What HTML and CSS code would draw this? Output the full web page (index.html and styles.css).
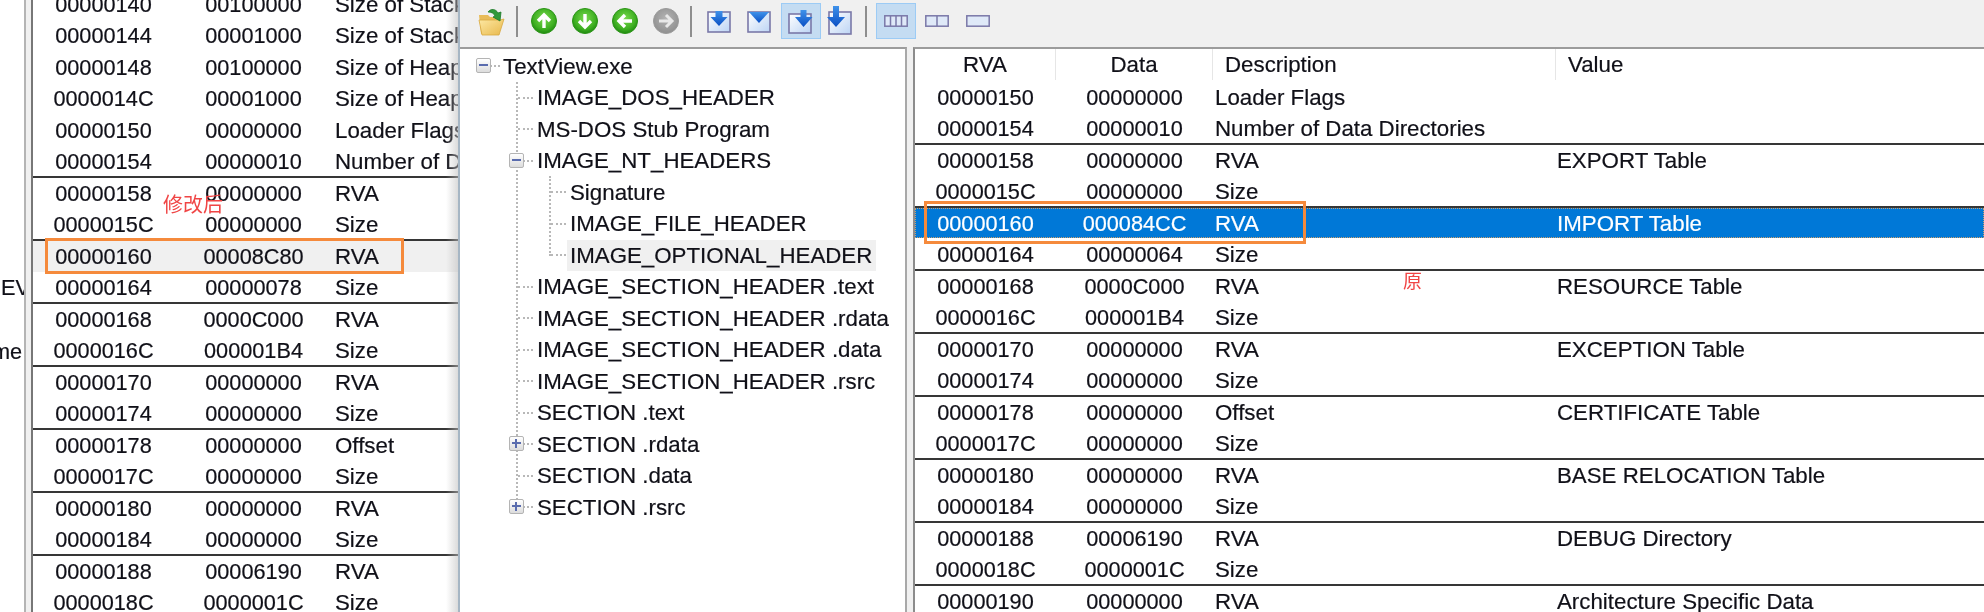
FILE: index.html
```html
<!DOCTYPE html>
<html lang="zh-CN">
<head>
  <meta charset="UTF-8">
  <title>PE View</title>
  <link rel="stylesheet" href="styles.css">
</head>
<body>
  <svg class="defs" width="0" height="0">
    <defs>
      <radialGradient id="green" cx="50%" cy="40%" r="60%">
        <stop offset="0" stop-color="#7ada4e"/>
        <stop offset="0.7" stop-color="#3fb022"/>
        <stop offset="1" stop-color="#1f8a10"/>
      </radialGradient>
      <radialGradient id="grey" cx="50%" cy="40%" r="60%">
        <stop offset="0" stop-color="#b4b4b4"/>
        <stop offset="1" stop-color="#8f8f8f"/>
      </radialGradient>
      <linearGradient id="paper" x1="0" y1="0" x2="1" y2="1">
        <stop offset="0" stop-color="#ffffff"/>
        <stop offset="1" stop-color="#bcd4f4"/>
      </linearGradient>
      <linearGradient id="arrow" x1="0" y1="0" x2="0" y2="1">
        <stop offset="0" stop-color="#3f92ea"/>
        <stop offset="1" stop-color="#0a4fc4"/>
      </linearGradient>
      <linearGradient id="folder" x1="0" y1="0" x2="1" y2="1">
        <stop offset="0" stop-color="#fde9a4"/>
        <stop offset="1" stop-color="#e8b84c"/>
      </linearGradient>
      <symbol id="i-up" viewBox="0 0 26 26">
        <circle cx="13" cy="13" r="12.5" fill="url(#green)" stroke="#2a9416"/>
        <path d="M13 20V7M7 13l6-6 6 6" fill="none" stroke="#fff" stroke-width="3.4"/>
      </symbol>
      <symbol id="i-down" viewBox="0 0 26 26">
        <circle cx="13" cy="13" r="12.5" fill="url(#green)" stroke="#2a9416"/>
        <path d="M13 6v13M7 13l6 6 6-6" fill="none" stroke="#fff" stroke-width="3.4"/>
      </symbol>
      <symbol id="i-left" viewBox="0 0 26 26">
        <circle cx="13" cy="13" r="12.5" fill="url(#green)" stroke="#2a9416"/>
        <path d="M20 13H7M13 7l-6 6 6 6" fill="none" stroke="#fff" stroke-width="3.4"/>
      </symbol>
      <symbol id="i-right" viewBox="0 0 26 26">
        <circle cx="13" cy="13" r="12.5" fill="url(#grey)" stroke="#9a9a9a"/>
        <path d="M6 13h13M13 7l6 6-6 6" fill="none" stroke="#e8e8e8" stroke-width="3"/>
      </symbol>
    </defs>
  </svg>

  <div class="page">
    <div class="strip">
      <div class="strip-ev">EV</div>
      <div class="strip-me">me</div>
    </div>

    <div class="back-panel">
      <div class="back-table">
        <div class="row"><span class="c">00000140</span><span class="c">00100000</span><span class="d">Size of Stack Reserve</span></div>
        <div class="row"><span class="c">00000144</span><span class="c">00001000</span><span class="d">Size of Stack Commit</span></div>
        <div class="row"><span class="c">00000148</span><span class="c">00100000</span><span class="d">Size of Heap Reserve</span></div>
        <div class="row"><span class="c">0000014C</span><span class="c">00001000</span><span class="d">Size of Heap Commit</span></div>
        <div class="row"><span class="c">00000150</span><span class="c">00000000</span><span class="d">Loader Flags</span></div>
        <div class="row end"><span class="c">00000154</span><span class="c">00000010</span><span class="d">Number of Data Directories</span></div>
        <div class="row"><span class="c">00000158</span><span class="c">00000000</span><span class="d">RVA</span></div>
        <div class="row end"><span class="c">0000015C</span><span class="c">00000000</span><span class="d">Size</span></div>
        <div class="row inactive"><span class="c">00000160</span><span class="c">00008C80</span><span class="d">RVA</span></div>
        <div class="row end"><span class="c">00000164</span><span class="c">00000078</span><span class="d">Size</span></div>
        <div class="row"><span class="c">00000168</span><span class="c">0000C000</span><span class="d">RVA</span></div>
        <div class="row end"><span class="c">0000016C</span><span class="c">000001B4</span><span class="d">Size</span></div>
        <div class="row"><span class="c">00000170</span><span class="c">00000000</span><span class="d">RVA</span></div>
        <div class="row end"><span class="c">00000174</span><span class="c">00000000</span><span class="d">Size</span></div>
        <div class="row"><span class="c">00000178</span><span class="c">00000000</span><span class="d">Offset</span></div>
        <div class="row end"><span class="c">0000017C</span><span class="c">00000000</span><span class="d">Size</span></div>
        <div class="row"><span class="c">00000180</span><span class="c">00000000</span><span class="d">RVA</span></div>
        <div class="row end"><span class="c">00000184</span><span class="c">00000000</span><span class="d">Size</span></div>
        <div class="row"><span class="c">00000188</span><span class="c">00006190</span><span class="d">RVA</span></div>
        <div class="row end"><span class="c">0000018C</span><span class="c">0000001C</span><span class="d">Size</span></div>
      </div>
    </div>

    <div class="window">
      <div class="toolbar">
        <span class="tool t-folder">
          <svg width="28" height="29" viewBox="0 0 28 29">
            <path d="M1 8h9l2 2h9v17H3z" fill="#e8bc58"/>
            <path d="M1 13h21l4-1-5 16H4z" fill="url(#folder)" stroke="#d8a840" stroke-width="0.8"/>
            <path d="M10 5c3-4 8-3 10 1l3-1-1 9-7-4 2-1c-1-3-4-4-7-4z" fill="#2f9a3a" stroke="#1d7a28" stroke-width="0.8"/>
          </svg>
        </span>
        <span class="tool-sep"></span>
        <span class="tool t-round"><svg width="26" height="26"><use href="#i-up"/></svg></span>
        <span class="tool t-round"><svg width="26" height="26"><use href="#i-down"/></svg></span>
        <span class="tool t-round"><svg width="26" height="26"><use href="#i-left"/></svg></span>
        <span class="tool t-round"><svg width="26" height="26"><use href="#i-right"/></svg></span>
        <span class="tool-sep"></span>
        <span class="tool t-doc">
          <svg width="24" height="24" viewBox="0 0 24 24">
            <rect x="1" y="3" width="22" height="20" fill="url(#paper)" stroke="#7a78a8" stroke-width="1.6"/>
            <path d="M8.500 2h7v6h5L12 17 3.500 8h5z" fill="url(#arrow)"/>
          </svg>
        </span>
        <span class="tool t-doc">
          <svg width="24" height="24" viewBox="0 0 24 24">
            <rect x="1" y="3" width="22" height="20" fill="url(#paper)" stroke="#7a78a8" stroke-width="1.6"/>
            <path d="M2 3h20L12 14z" fill="url(#arrow)"/>
          </svg>
        </span>
        <span class="tool t-doc active">
          <svg width="26" height="26" viewBox="0 0 26 26">
            <rect x="1" y="6" width="22" height="19" fill="url(#paper)" stroke="#7a78a8" stroke-width="1.6"/>
            <path d="M12.500 2h6v7h6L15.500 19 7 9h5.500z" fill="url(#arrow)"/>
          </svg>
        </span>
        <span class="tool t-doc t-narrow">
          <svg width="26" height="30" viewBox="0 0 26 30">
            <rect x="3" y="6" width="22" height="22" fill="url(#paper)" stroke="#7a78a8" stroke-width="1.6"/>
            <path d="M7 0h6v11h6L10 21 1 11h6z" fill="url(#arrow)"/>
          </svg>
        </span>
        <span class="tool-sep"></span>
        <span class="tool t-view active">
          <svg width="24" height="12" viewBox="0 0 24 12">
            <rect x="0.800" y="0.800" width="22.400" height="10.400" fill="#dfe9f8" stroke="#7a78a8" stroke-width="1.500"/>
            <path d="M6.500 1v10M12 1v10M17.500 1v10" stroke="#7a78a8" stroke-width="1.500"/>
          </svg>
        </span>
        <span class="tool t-view">
          <svg width="24" height="12" viewBox="0 0 24 12">
            <rect x="0.800" y="0.800" width="22.400" height="10.400" fill="#dfe9f8" stroke="#7a78a8" stroke-width="1.500"/>
            <path d="M12 1v10" stroke="#7a78a8" stroke-width="1.500"/>
          </svg>
        </span>
        <span class="tool t-view">
          <svg width="24" height="12" viewBox="0 0 24 12">
            <rect x="0.800" y="0.800" width="22.400" height="10.400" fill="#dfe9f8" stroke="#7a78a8" stroke-width="1.500"/>
          </svg>
        </span>
      </div>

      <div class="panes">
        <div class="tree">
          <div class="node l0"><span class="exp minus e0"></span><span class="label">TextView.exe</span></div>
          <div class="branch b1">
            <div class="node l1"><span class="label">IMAGE_DOS_HEADER</span></div>
            <div class="node l1"><span class="label">MS-DOS Stub Program</span></div>
            <div class="node l1"><span class="exp minus e1"></span><span class="label">IMAGE_NT_HEADERS</span></div>
            <div class="branch b2">
              <div class="node l2"><span class="label">Signature</span></div>
              <div class="node l2"><span class="label">IMAGE_FILE_HEADER</span></div>
              <div class="node l2"><span class="label picked">IMAGE_OPTIONAL_HEADER</span></div>
            </div>
            <div class="node l1"><span class="label">IMAGE_SECTION_HEADER .text</span></div>
            <div class="node l1"><span class="label">IMAGE_SECTION_HEADER .rdata</span></div>
            <div class="node l1"><span class="label">IMAGE_SECTION_HEADER .data</span></div>
            <div class="node l1"><span class="label">IMAGE_SECTION_HEADER .rsrc</span></div>
            <div class="node l1"><span class="label">SECTION .text</span></div>
            <div class="node l1"><span class="exp plus e1"></span><span class="label">SECTION .rdata</span></div>
            <div class="node l1"><span class="label">SECTION .data</span></div>
            <div class="node l1"><span class="exp plus e1"></span><span class="label">SECTION .rsrc</span></div>
          </div>
        </div>

        <div class="list">
          <div class="list-head">
            <span class="h center">RVA</span>
            <span class="h center">Data</span>
            <span class="h">Description</span>
            <span class="h">Value</span>
          </div>
          <div class="row"><span class="c">00000150</span><span class="c">00000000</span><span class="d">Loader Flags</span><span class="v"></span></div>
          <div class="row end"><span class="c">00000154</span><span class="c">00000010</span><span class="d">Number of Data Directories</span><span class="v"></span></div>
          <div class="row"><span class="c">00000158</span><span class="c">00000000</span><span class="d">RVA</span><span class="v">EXPORT Table</span></div>
          <div class="row end"><span class="c">0000015C</span><span class="c">00000000</span><span class="d">Size</span><span class="v"></span></div>
          <div class="row selected"><span class="c">00000160</span><span class="c">000084CC</span><span class="d">RVA</span><span class="v">IMPORT Table</span></div>
          <div class="row end"><span class="c">00000164</span><span class="c">00000064</span><span class="d">Size</span><span class="v"></span></div>
          <div class="row"><span class="c">00000168</span><span class="c">0000C000</span><span class="d">RVA</span><span class="v">RESOURCE Table</span></div>
          <div class="row end"><span class="c">0000016C</span><span class="c">000001B4</span><span class="d">Size</span><span class="v"></span></div>
          <div class="row"><span class="c">00000170</span><span class="c">00000000</span><span class="d">RVA</span><span class="v">EXCEPTION Table</span></div>
          <div class="row end"><span class="c">00000174</span><span class="c">00000000</span><span class="d">Size</span><span class="v"></span></div>
          <div class="row"><span class="c">00000178</span><span class="c">00000000</span><span class="d">Offset</span><span class="v">CERTIFICATE Table</span></div>
          <div class="row end"><span class="c">0000017C</span><span class="c">00000000</span><span class="d">Size</span><span class="v"></span></div>
          <div class="row"><span class="c">00000180</span><span class="c">00000000</span><span class="d">RVA</span><span class="v">BASE RELOCATION Table</span></div>
          <div class="row end"><span class="c">00000184</span><span class="c">00000000</span><span class="d">Size</span><span class="v"></span></div>
          <div class="row"><span class="c">00000188</span><span class="c">00006190</span><span class="d">RVA</span><span class="v">DEBUG Directory</span></div>
          <div class="row end"><span class="c">0000018C</span><span class="c">0000001C</span><span class="d">Size</span><span class="v"></span></div>
          <div class="row"><span class="c">00000190</span><span class="c">00000000</span><span class="d">RVA</span><span class="v">Architecture Specific Data</span></div>
        </div>
      </div>
    </div>

    <!-- annotations drawn over the screenshot -->
    <div class="mark mark-left"></div>
    <div class="mark mark-right"></div>
    <div class="note note-left">修改后</div>
    <div class="note note-right">原</div>
  </div>
</body>
</html>
```

FILE: styles.css
```css
html, body { margin: 0; padding: 0; background: #fff; }
body { font-family: "Liberation Sans", Arial, sans-serif; font-size: 21.7px; color: #101018; -webkit-text-stroke: 0.2px; }
.defs { position: absolute; }

.page { position: relative; display: flex; width: 1984px; height: 612px; overflow: hidden; filter: blur(0.45px); }

/* far left window, only a few letters show */
.strip { width: 24px; flex: none; overflow: hidden; white-space: nowrap; padding-top: 272px; box-sizing: border-box; line-height: 31.5px; }
.strip-ev { margin-left: 1px; }
.strip-me { margin-top: 32.5px; margin-left: -8px; }

/* table window behind */
.back-panel { position: relative; width: 434px; flex: none; box-sizing: border-box; overflow: hidden; background: #f0f0f0; border-left: 2px solid #b4b4b4; padding-left: 5px; }
.back-panel::after { content: ""; position: absolute; top: 0; right: 0; bottom: 0; width: 12px; background: linear-gradient(to right, rgba(255,255,255,0), rgba(190,190,190,0.55)); }
.back-table { height: 640px; margin-top: -11.5px; background: #fff; border-left: 2px solid #777; white-space: nowrap; }

.row { display: grid; height: 31.5px; line-height: 31.5px; white-space: nowrap; overflow: hidden; }
.back-table .row { grid-template-columns: 141px 159px 1fr; }
.list .row { grid-template-columns: 141px 157px 343px 1fr; }
.row.end { box-shadow: inset 0 -2px #363636; }
.row.inactive { background: #f0f0f0; }
.row.selected { height: 30.5px; margin-bottom: 1px; background: #0078d7; color: #fff; outline: 1px dotted #c9a070; outline-offset: -1px; }
.c { text-align: center; }
.d { padding-left: 2px; overflow: hidden; font-size: 22.3px; }
.v { padding-left: 1px; font-size: 22.3px; }

/* front window */
.window { flex: 1; min-width: 0; display: flex; flex-direction: column; background: #f0f0f0; border-left: 2px solid #a6b6c4; box-shadow: -1px 0 0 #a8a8a8; }

.toolbar { display: flex; align-items: center; height: 47px; flex: none; padding: 0 0 5px 12px; box-sizing: border-box; }
.tool { display: flex; align-items: center; justify-content: center; width: 40px; height: 36px; flex: none; box-sizing: border-box; }
.tool-sep { width: 2px; height: 31px; margin: 0 4px; flex: none; background: #8e8e8e; }
.t-round { width: 40.5px; }
.t-narrow { width: 36px; margin-right: 4px; }
.active { background: #c4dcf2; border: 1px solid #9ccbf5; }
.tool-sep + .t-round { margin-left: 2px; }
.tool-sep + .t-doc { margin-left: 3px; }
.tool-sep + .t-view { margin-left: 5px; }
.t-doc.active { margin-left: 2px; }
.t-view + .t-view { margin-left: 1px; }

.panes { flex: 1; min-height: 0; display: flex; }

/* tree */
.tree { width: 447px; flex: none; box-sizing: border-box; background: #fff; border-top: 2px solid #9c9c9c; border-right: 2px solid #a8a8a8; padding-top: 1.25px; overflow: hidden; white-space: nowrap; font-size: 22.3px; }
.node { position: relative; display: flex; align-items: center; height: 31.5px; }
.node::before { content: ""; position: absolute; top: 50%; width: 15px; border-top: 2px dotted #b8b8b8; margin-top: -1px; }
.l0 { padding-left: 43px; }
.l0::before { left: 30px; width: 10px; }
.l1 { padding-left: 77px; }
.l1::before { left: 58px; }
.l2 { padding-left: 110px; }
.l2::before { left: 91px; }
.label { margin-left: -3px; padding: 0 4px 0 3px; line-height: 31px; }
.picked { background: #f0f0f0; }

.branch { position: relative; }
.branch::before { content: ""; position: absolute; top: 0; border-left: 2px dotted #b8b8b8; }
.b1::before { left: 56px; bottom: 23px; }
.b2::before { left: 89px; bottom: 15px; }

.exp { position: absolute; z-index: 1; top: 8px; width: 15px; height: 15px; box-sizing: border-box; border: 1.5px solid #b4b4b4; border-radius: 2px; background: linear-gradient(#fff, #dcdcdc); }
.exp::before { content: ""; position: absolute; left: 2px; right: 2px; top: 5px; height: 2px; background: #5a6cae; }
.plus::after { content: ""; position: absolute; top: 2px; bottom: 2px; left: 5px; width: 2px; background: #5a6cae; }
.e0 { left: 16px; }
.e1 { left: 49px; }

/* list */
.list { flex: 1; min-width: 0; margin-left: 6px; background: #fff; border-top: 2px solid #9c9c9c; border-left: 2px solid #8c8c8c; overflow: hidden; }
.list-head { display: grid; grid-template-columns: 141px 157px 343px 1fr; height: 32.5px; line-height: 32px; }
.h { padding-left: 12px; height: 31px; border-right: 1px solid #e6e6e6; font-size: 22.3px; }
.h:last-child { border-right: 0; }
.h.center { padding-left: 0; text-align: center; }

/* annotations */
.mark { position: absolute; box-sizing: border-box; border: 3px solid #f58a3c; }
.mark-left { left: 45px; top: 238px; width: 359px; height: 36px; }
.mark-right { left: 924px; top: 201px; width: 382px; height: 43px; }
.note { position: absolute; color: #f04545; font-family: "Noto Sans CJK SC", sans-serif; line-height: 1; -webkit-text-stroke: 0; }
.note-left { left: 163px; top: 194px; font-size: 20px; }
.note-right { left: 1403px; top: 270px; font-size: 19px; }
```
